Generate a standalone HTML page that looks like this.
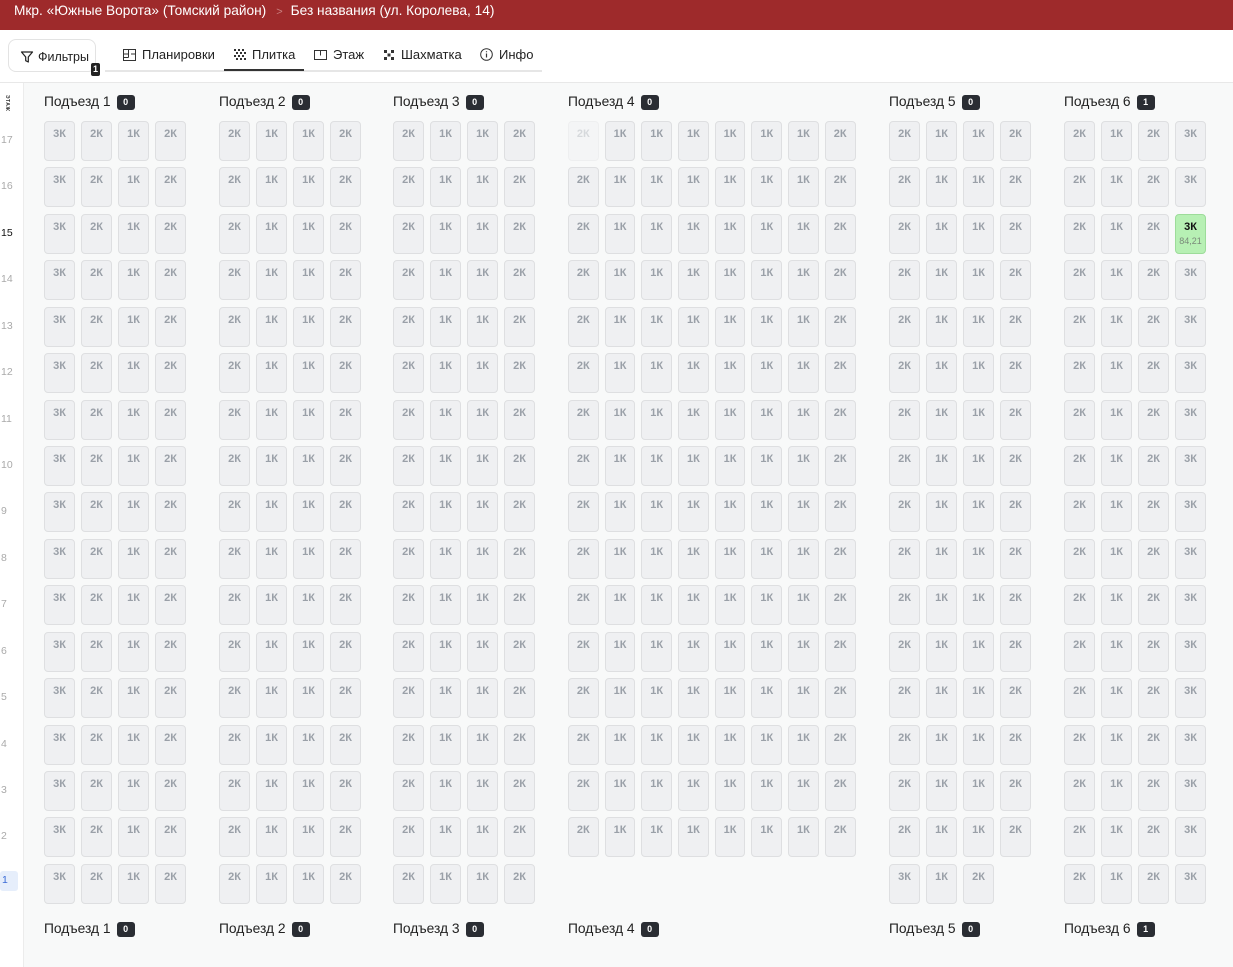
<!DOCTYPE html>
<html><head><meta charset="utf-8"><style>
*{box-sizing:border-box;margin:0;padding:0}
body{width:1233px;height:967px;overflow:hidden;background:#f8f9f9;font-family:"Liberation Sans","DejaVu Sans",sans-serif;position:relative}
.hd{position:absolute;left:0;top:0;width:1233px;height:30px;background:#9e2a2b;color:#fff;font-size:13.7px;line-height:22px;padding-left:14px;white-space:nowrap}
.hd .s{color:#c98080;margin:0 8px 0 10px;font-size:11px}
.tb{position:absolute;left:0;top:30px;width:1233px;height:53px;background:#fff;border-bottom:1px solid #e8e8e8}
.fb{position:absolute;left:8px;top:9px;width:88px;height:33px;border:1px solid #e3e3e3;border-radius:8px;font-size:12.5px;color:#222;padding:10px 0 0 11px;background:#fff}
.fb svg{vertical-align:-3px;margin-right:4px}
.bd{position:absolute;left:91px;top:33px;width:9px;height:13px;background:#222;color:#fff;font-size:9px;font-weight:bold;text-align:center;line-height:13px;border-radius:2px}
.tabs{position:absolute;left:105px;top:0;width:437px;height:42px;border-bottom:2px solid #e6e6e6}
.tab{position:absolute;top:17px;font-size:13px;color:#222;white-space:nowrap}
.tab svg{vertical-align:-2px;margin-right:6px}
.act{position:absolute;left:119px;top:39px;width:80px;height:2px;background:#333}
.lc{position:absolute;left:0;top:83px;width:24px;height:884px;background:#fff;border-right:1px solid #ececec}
.et{position:absolute;left:0;top:95px;font-size:5px;font-weight:bold;color:#333;writing-mode:vertical-rl;letter-spacing:0.5px;width:10px}
.fl{position:absolute;left:1px;font-size:10.5px;color:#aaa;width:20px}
.fl.c{color:#111}
.fl.sel{background:#e6eefb;color:#3a6ad6;border-radius:3px;left:0;width:18px;height:20px;padding:3px 0 0 2px}
.h{position:absolute;font-size:13.8px;color:#222;white-space:nowrap}
.h i{display:inline-block;font-style:normal;background:#2a2d33;color:#fff;font-size:9px;font-weight:bold;width:18px;height:15px;line-height:15px;text-align:center;border-radius:3px;margin-left:6px;vertical-align:1px}
.r{position:absolute;left:0;height:40px}
.g{position:absolute;top:0;white-space:nowrap;font-size:0}
.g b{display:inline-block;width:31px;height:40px;margin-right:6px;border:1px solid #dedfe1;border-radius:4px;background:#eff0f2;color:#9aa0a8;font-size:11px;font-weight:bold;text-align:center;padding-top:6px;vertical-align:top}
.g.w b{width:30.7px}
.g b.f{opacity:.35}
.g b.gr{background:#b7f0b4;border-color:#9ddc9a;color:#111}
.g b.gr span{display:block;font-size:9px;font-weight:normal;color:#7a8a7a;margin-top:3px}
</style></head><body>
<div class="hd">Мкр. «Южные Ворота» (Томский район)<span class="s">&gt;</span>Без названия (ул. Королева, 14)</div>
<div class="tb">
<div class="fb"><svg width="14" height="14" viewBox="0 0 14 14"><path d="M1.5 2h11l-4.2 5v5l-2.6-1.3V7z" fill="none" stroke="#222" stroke-width="1.2" stroke-linejoin="round"/></svg>Фильтры</div>
<div class="bd">1</div>
<div class="tabs">
<div class="tab" style="left:18px"><svg width="13" height="12" viewBox="0 0 13 12"><path d="M.5.5h12v11H.5zM.5 5h5M5.5.5v8M8 5h4.5M.5 8.5h5" fill="none" stroke="#333"/></svg>Планировки</div>
<div class="tab" style="left:129px"><svg width="12" height="12" viewBox="0 0 12 12"><g fill="#333"><rect x="0" y="0" width="2" height="2"/><rect x="4" y="0" width="2" height="2"/><rect x="8" y="0" width="2" height="2"/><rect x="2" y="3" width="2" height="2"/><rect x="6" y="3" width="2" height="2"/><rect x="10" y="3" width="2" height="2"/><rect x="0" y="6" width="2" height="2"/><rect x="4" y="6" width="2" height="2"/><rect x="8" y="6" width="2" height="2"/><rect x="2" y="9" width="2" height="2"/><rect x="6" y="9" width="2" height="2"/><rect x="10" y="9" width="2" height="2"/></g></svg>Плитка</div>
<div class="tab" style="left:209px"><svg width="13" height="12" viewBox="0 0 13 12"><path d="M.5 1.5h12v9H.5zM6.5 1.5v5" fill="none" stroke="#333"/></svg>Этаж</div>
<div class="tab" style="left:278px"><svg width="12" height="12" viewBox="0 0 12 12"><g fill="#333"><rect x="1" y="1" width="3" height="3"/><rect x="8" y="1" width="3" height="3"/><rect x="4.5" y="4.5" width="3" height="3"/><rect x="1" y="8" width="3" height="3"/><rect x="8" y="8" width="3" height="3"/></g></svg>Шахматка</div>
<div class="tab" style="left:375px"><svg width="13" height="13" viewBox="0 0 13 13"><circle cx="6.5" cy="6.5" r="5.8" fill="none" stroke="#333"/><path d="M6.5 5.5v4M6.5 3.3v1" stroke="#333" stroke-width="1.2"/></svg>Инфо</div>
<div class="act"></div>
</div>
</div>
<div class="lc"></div>
<div class="et">ЭТАЖ</div>
<div class="fl" style="top:134px">17</div>
<div class="fl" style="top:180px">16</div>
<div class="fl c" style="top:227px">15</div>
<div class="fl" style="top:273px">14</div>
<div class="fl" style="top:320px">13</div>
<div class="fl" style="top:366px">12</div>
<div class="fl" style="top:413px">11</div>
<div class="fl" style="top:459px">10</div>
<div class="fl" style="top:505px">9</div>
<div class="fl" style="top:552px">8</div>
<div class="fl" style="top:598px">7</div>
<div class="fl" style="top:645px">6</div>
<div class="fl" style="top:691px">5</div>
<div class="fl" style="top:738px">4</div>
<div class="fl" style="top:784px">3</div>
<div class="fl" style="top:830px">2</div>
<div class="fl sel" style="top:871px">1</div>

<div class="h" style="left:44px;top:94px">Подъезд 1<i>0</i></div>
<div class="h" style="left:219px;top:94px">Подъезд 2<i>0</i></div>
<div class="h" style="left:393px;top:94px">Подъезд 3<i>0</i></div>
<div class="h" style="left:568px;top:94px">Подъезд 4<i>0</i></div>
<div class="h" style="left:889px;top:94px">Подъезд 5<i>0</i></div>
<div class="h" style="left:1064px;top:94px">Подъезд 6<i>1</i></div>
<div class="h" style="left:44px;top:921px">Подъезд 1<i>0</i></div>
<div class="h" style="left:219px;top:921px">Подъезд 2<i>0</i></div>
<div class="h" style="left:393px;top:921px">Подъезд 3<i>0</i></div>
<div class="h" style="left:568px;top:921px">Подъезд 4<i>0</i></div>
<div class="h" style="left:889px;top:921px">Подъезд 5<i>0</i></div>
<div class="h" style="left:1064px;top:921px">Подъезд 6<i>1</i></div>

<div class="r" style="top:121px"><div class="g" style="left:44px"><b>3К</b><b>2К</b><b>1К</b><b>2К</b></div><div class="g" style="left:219px"><b>2К</b><b>1К</b><b>1К</b><b>2К</b></div><div class="g" style="left:393px"><b>2К</b><b>1К</b><b>1К</b><b>2К</b></div><div class="g w" style="left:568px"><b class="f">2К</b><b>1К</b><b>1К</b><b>1К</b><b>1К</b><b>1К</b><b>1К</b><b>2К</b></div><div class="g" style="left:889px"><b>2К</b><b>1К</b><b>1К</b><b>2К</b></div><div class="g" style="left:1064px"><b>2К</b><b>1К</b><b>2К</b><b>3К</b></div></div>
<div class="r" style="top:167px"><div class="g" style="left:44px"><b>3К</b><b>2К</b><b>1К</b><b>2К</b></div><div class="g" style="left:219px"><b>2К</b><b>1К</b><b>1К</b><b>2К</b></div><div class="g" style="left:393px"><b>2К</b><b>1К</b><b>1К</b><b>2К</b></div><div class="g w" style="left:568px"><b>2К</b><b>1К</b><b>1К</b><b>1К</b><b>1К</b><b>1К</b><b>1К</b><b>2К</b></div><div class="g" style="left:889px"><b>2К</b><b>1К</b><b>1К</b><b>2К</b></div><div class="g" style="left:1064px"><b>2К</b><b>1К</b><b>2К</b><b>3К</b></div></div>
<div class="r" style="top:214px"><div class="g" style="left:44px"><b>3К</b><b>2К</b><b>1К</b><b>2К</b></div><div class="g" style="left:219px"><b>2К</b><b>1К</b><b>1К</b><b>2К</b></div><div class="g" style="left:393px"><b>2К</b><b>1К</b><b>1К</b><b>2К</b></div><div class="g w" style="left:568px"><b>2К</b><b>1К</b><b>1К</b><b>1К</b><b>1К</b><b>1К</b><b>1К</b><b>2К</b></div><div class="g" style="left:889px"><b>2К</b><b>1К</b><b>1К</b><b>2К</b></div><div class="g" style="left:1064px"><b>2К</b><b>1К</b><b>2К</b><b class="gr">3К<span>84,21</span></b></div></div>
<div class="r" style="top:260px"><div class="g" style="left:44px"><b>3К</b><b>2К</b><b>1К</b><b>2К</b></div><div class="g" style="left:219px"><b>2К</b><b>1К</b><b>1К</b><b>2К</b></div><div class="g" style="left:393px"><b>2К</b><b>1К</b><b>1К</b><b>2К</b></div><div class="g w" style="left:568px"><b>2К</b><b>1К</b><b>1К</b><b>1К</b><b>1К</b><b>1К</b><b>1К</b><b>2К</b></div><div class="g" style="left:889px"><b>2К</b><b>1К</b><b>1К</b><b>2К</b></div><div class="g" style="left:1064px"><b>2К</b><b>1К</b><b>2К</b><b>3К</b></div></div>
<div class="r" style="top:307px"><div class="g" style="left:44px"><b>3К</b><b>2К</b><b>1К</b><b>2К</b></div><div class="g" style="left:219px"><b>2К</b><b>1К</b><b>1К</b><b>2К</b></div><div class="g" style="left:393px"><b>2К</b><b>1К</b><b>1К</b><b>2К</b></div><div class="g w" style="left:568px"><b>2К</b><b>1К</b><b>1К</b><b>1К</b><b>1К</b><b>1К</b><b>1К</b><b>2К</b></div><div class="g" style="left:889px"><b>2К</b><b>1К</b><b>1К</b><b>2К</b></div><div class="g" style="left:1064px"><b>2К</b><b>1К</b><b>2К</b><b>3К</b></div></div>
<div class="r" style="top:353px"><div class="g" style="left:44px"><b>3К</b><b>2К</b><b>1К</b><b>2К</b></div><div class="g" style="left:219px"><b>2К</b><b>1К</b><b>1К</b><b>2К</b></div><div class="g" style="left:393px"><b>2К</b><b>1К</b><b>1К</b><b>2К</b></div><div class="g w" style="left:568px"><b>2К</b><b>1К</b><b>1К</b><b>1К</b><b>1К</b><b>1К</b><b>1К</b><b>2К</b></div><div class="g" style="left:889px"><b>2К</b><b>1К</b><b>1К</b><b>2К</b></div><div class="g" style="left:1064px"><b>2К</b><b>1К</b><b>2К</b><b>3К</b></div></div>
<div class="r" style="top:400px"><div class="g" style="left:44px"><b>3К</b><b>2К</b><b>1К</b><b>2К</b></div><div class="g" style="left:219px"><b>2К</b><b>1К</b><b>1К</b><b>2К</b></div><div class="g" style="left:393px"><b>2К</b><b>1К</b><b>1К</b><b>2К</b></div><div class="g w" style="left:568px"><b>2К</b><b>1К</b><b>1К</b><b>1К</b><b>1К</b><b>1К</b><b>1К</b><b>2К</b></div><div class="g" style="left:889px"><b>2К</b><b>1К</b><b>1К</b><b>2К</b></div><div class="g" style="left:1064px"><b>2К</b><b>1К</b><b>2К</b><b>3К</b></div></div>
<div class="r" style="top:446px"><div class="g" style="left:44px"><b>3К</b><b>2К</b><b>1К</b><b>2К</b></div><div class="g" style="left:219px"><b>2К</b><b>1К</b><b>1К</b><b>2К</b></div><div class="g" style="left:393px"><b>2К</b><b>1К</b><b>1К</b><b>2К</b></div><div class="g w" style="left:568px"><b>2К</b><b>1К</b><b>1К</b><b>1К</b><b>1К</b><b>1К</b><b>1К</b><b>2К</b></div><div class="g" style="left:889px"><b>2К</b><b>1К</b><b>1К</b><b>2К</b></div><div class="g" style="left:1064px"><b>2К</b><b>1К</b><b>2К</b><b>3К</b></div></div>
<div class="r" style="top:492px"><div class="g" style="left:44px"><b>3К</b><b>2К</b><b>1К</b><b>2К</b></div><div class="g" style="left:219px"><b>2К</b><b>1К</b><b>1К</b><b>2К</b></div><div class="g" style="left:393px"><b>2К</b><b>1К</b><b>1К</b><b>2К</b></div><div class="g w" style="left:568px"><b>2К</b><b>1К</b><b>1К</b><b>1К</b><b>1К</b><b>1К</b><b>1К</b><b>2К</b></div><div class="g" style="left:889px"><b>2К</b><b>1К</b><b>1К</b><b>2К</b></div><div class="g" style="left:1064px"><b>2К</b><b>1К</b><b>2К</b><b>3К</b></div></div>
<div class="r" style="top:539px"><div class="g" style="left:44px"><b>3К</b><b>2К</b><b>1К</b><b>2К</b></div><div class="g" style="left:219px"><b>2К</b><b>1К</b><b>1К</b><b>2К</b></div><div class="g" style="left:393px"><b>2К</b><b>1К</b><b>1К</b><b>2К</b></div><div class="g w" style="left:568px"><b>2К</b><b>1К</b><b>1К</b><b>1К</b><b>1К</b><b>1К</b><b>1К</b><b>2К</b></div><div class="g" style="left:889px"><b>2К</b><b>1К</b><b>1К</b><b>2К</b></div><div class="g" style="left:1064px"><b>2К</b><b>1К</b><b>2К</b><b>3К</b></div></div>
<div class="r" style="top:585px"><div class="g" style="left:44px"><b>3К</b><b>2К</b><b>1К</b><b>2К</b></div><div class="g" style="left:219px"><b>2К</b><b>1К</b><b>1К</b><b>2К</b></div><div class="g" style="left:393px"><b>2К</b><b>1К</b><b>1К</b><b>2К</b></div><div class="g w" style="left:568px"><b>2К</b><b>1К</b><b>1К</b><b>1К</b><b>1К</b><b>1К</b><b>1К</b><b>2К</b></div><div class="g" style="left:889px"><b>2К</b><b>1К</b><b>1К</b><b>2К</b></div><div class="g" style="left:1064px"><b>2К</b><b>1К</b><b>2К</b><b>3К</b></div></div>
<div class="r" style="top:632px"><div class="g" style="left:44px"><b>3К</b><b>2К</b><b>1К</b><b>2К</b></div><div class="g" style="left:219px"><b>2К</b><b>1К</b><b>1К</b><b>2К</b></div><div class="g" style="left:393px"><b>2К</b><b>1К</b><b>1К</b><b>2К</b></div><div class="g w" style="left:568px"><b>2К</b><b>1К</b><b>1К</b><b>1К</b><b>1К</b><b>1К</b><b>1К</b><b>2К</b></div><div class="g" style="left:889px"><b>2К</b><b>1К</b><b>1К</b><b>2К</b></div><div class="g" style="left:1064px"><b>2К</b><b>1К</b><b>2К</b><b>3К</b></div></div>
<div class="r" style="top:678px"><div class="g" style="left:44px"><b>3К</b><b>2К</b><b>1К</b><b>2К</b></div><div class="g" style="left:219px"><b>2К</b><b>1К</b><b>1К</b><b>2К</b></div><div class="g" style="left:393px"><b>2К</b><b>1К</b><b>1К</b><b>2К</b></div><div class="g w" style="left:568px"><b>2К</b><b>1К</b><b>1К</b><b>1К</b><b>1К</b><b>1К</b><b>1К</b><b>2К</b></div><div class="g" style="left:889px"><b>2К</b><b>1К</b><b>1К</b><b>2К</b></div><div class="g" style="left:1064px"><b>2К</b><b>1К</b><b>2К</b><b>3К</b></div></div>
<div class="r" style="top:725px"><div class="g" style="left:44px"><b>3К</b><b>2К</b><b>1К</b><b>2К</b></div><div class="g" style="left:219px"><b>2К</b><b>1К</b><b>1К</b><b>2К</b></div><div class="g" style="left:393px"><b>2К</b><b>1К</b><b>1К</b><b>2К</b></div><div class="g w" style="left:568px"><b>2К</b><b>1К</b><b>1К</b><b>1К</b><b>1К</b><b>1К</b><b>1К</b><b>2К</b></div><div class="g" style="left:889px"><b>2К</b><b>1К</b><b>1К</b><b>2К</b></div><div class="g" style="left:1064px"><b>2К</b><b>1К</b><b>2К</b><b>3К</b></div></div>
<div class="r" style="top:771px"><div class="g" style="left:44px"><b>3К</b><b>2К</b><b>1К</b><b>2К</b></div><div class="g" style="left:219px"><b>2К</b><b>1К</b><b>1К</b><b>2К</b></div><div class="g" style="left:393px"><b>2К</b><b>1К</b><b>1К</b><b>2К</b></div><div class="g w" style="left:568px"><b>2К</b><b>1К</b><b>1К</b><b>1К</b><b>1К</b><b>1К</b><b>1К</b><b>2К</b></div><div class="g" style="left:889px"><b>2К</b><b>1К</b><b>1К</b><b>2К</b></div><div class="g" style="left:1064px"><b>2К</b><b>1К</b><b>2К</b><b>3К</b></div></div>
<div class="r" style="top:817px"><div class="g" style="left:44px"><b>3К</b><b>2К</b><b>1К</b><b>2К</b></div><div class="g" style="left:219px"><b>2К</b><b>1К</b><b>1К</b><b>2К</b></div><div class="g" style="left:393px"><b>2К</b><b>1К</b><b>1К</b><b>2К</b></div><div class="g w" style="left:568px"><b>2К</b><b>1К</b><b>1К</b><b>1К</b><b>1К</b><b>1К</b><b>1К</b><b>2К</b></div><div class="g" style="left:889px"><b>2К</b><b>1К</b><b>1К</b><b>2К</b></div><div class="g" style="left:1064px"><b>2К</b><b>1К</b><b>2К</b><b>3К</b></div></div>
<div class="r" style="top:864px"><div class="g" style="left:44px"><b>3К</b><b>2К</b><b>1К</b><b>2К</b></div><div class="g" style="left:219px"><b>2К</b><b>1К</b><b>1К</b><b>2К</b></div><div class="g" style="left:393px"><b>2К</b><b>1К</b><b>1К</b><b>2К</b></div><div class="g" style="left:889px"><b>3К</b><b>1К</b><b>2К</b></div><div class="g" style="left:1064px"><b>2К</b><b>1К</b><b>2К</b><b>3К</b></div></div>
</body></html>
